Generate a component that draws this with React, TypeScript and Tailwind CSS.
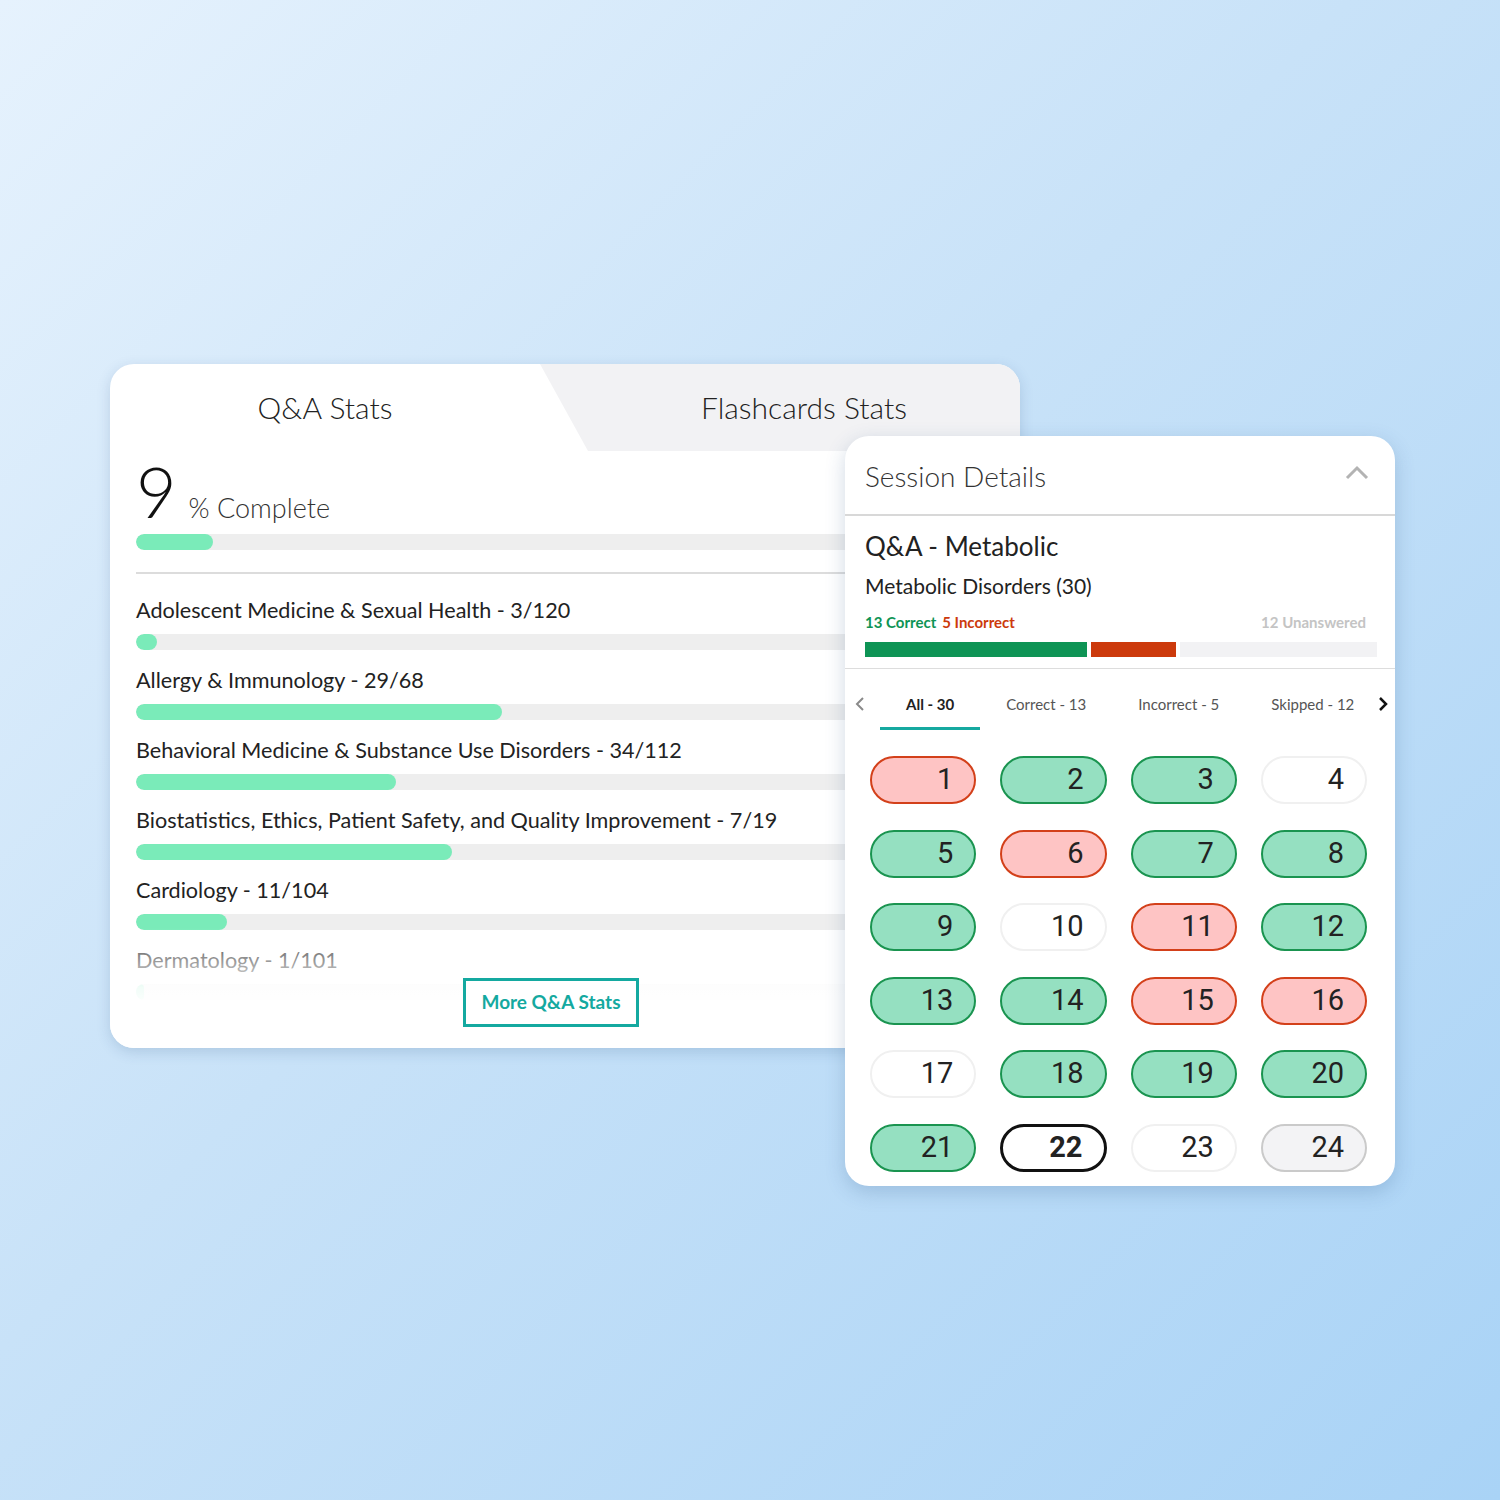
import React from "react";

const topics = [
  { name: "Adolescent Medicine & Sexual Health - 3/120", pct: 3 / 120 },
  { name: "Allergy & Immunology - 29/68", pct: 29 / 68 },
  { name: "Behavioral Medicine & Substance Use Disorders - 34/112", pct: 34 / 112 },
  { name: "Biostatistics, Ethics, Patient Safety, and Quality Improvement - 7/19", pct: 7 / 19 },
  { name: "Cardiology - 11/104", pct: 11 / 104 },
  { name: "Dermatology - 1/101", pct: 1 / 101 },
];

type Kind = "c" | "i" | "u" | "cur" | "s";
const pills: Kind[] = [
  "i", "c", "c", "u",
  "c", "i", "c", "c",
  "c", "u", "i", "c",
  "c", "c", "i", "i",
  "u", "c", "c", "c",
  "c", "cur", "u", "s",
];

const pillCls: Record<Kind, string> = {
  c: "bg-[#95e0c1] border-2 border-[#1a9450]",
  i: "bg-[#fec4c4] border-2 border-[#d3401a]",
  u: "bg-white border-2 border-[#f0f0f0]",
  cur: "bg-white border-[3px] border-[#111] font-bold",
  s: "bg-[#f3f3f5] border-2 border-[#cacaca]",
};

const tabs = [
  { label: "All - 30", active: true },
  { label: "Correct - 13", active: false },
  { label: "Incorrect - 5", active: false },
  { label: "Skipped - 12", active: false },
];

export default function App() {
  return (
    <div
      className="w-[1500px] h-[1500px] bg-[linear-gradient(135deg,#e6f2fd_0%,#c8e2f8_45%,#a9d3f6_100%)] pt-[364px] pl-[110px]"
      style={{ fontFamily: "Lato, 'Noto Sans', sans-serif" }}
    >
      <div className="relative">
        {/* Left card */}
        <div className="relative w-[910px] h-[684px] bg-white rounded-[24px] overflow-hidden shadow-[0_4px_14px_rgba(40,80,130,0.18)]">
          <div className="flex h-[87px]">
            <div className="w-[430px] flex items-center justify-center text-[30px] font-light text-[#222]">
              Q&amp;A Stats
            </div>
            <div className="w-[480px] bg-[#f2f2f4] [clip-path:polygon(0_0,100%_0,100%_100%,48px_100%)] flex items-center justify-center pl-[48px] text-[30px] font-light text-[#222]">
              Flashcards Stats
            </div>
          </div>
          <div className="px-[26px]">
            <div className="flex items-baseline mt-[5px]">
              <span className="text-[70px] leading-none font-light text-[#111]">9</span>
              <span className="ml-[12px] text-[27px] leading-none font-light text-[#333]">% Complete</span>
            </div>
            <div className="mt-[8px] h-4 rounded-full bg-[#eeeeee] overflow-hidden">
              <div className="h-full rounded-full bg-[#7aebb9]" style={{ width: "9%" }} />
            </div>
            <div className="mt-[22px] h-[2px] bg-[#dcdcdc]" />
            <div className="mt-[22px] flex flex-col gap-[16px]">
              {topics.map((t) => (
                <div key={t.name}>
                  <div className="text-[21.6px] leading-[28px] text-[#222]">{t.name}</div>
                  <div className="mt-[10px] h-4 rounded-full bg-[#eeeeee] overflow-hidden">
                    <div className="h-full rounded-full bg-[#7aebb9]" style={{ width: `${t.pct * 100}%` }} />
                  </div>
                </div>
              ))}
            </div>
          </div>
          <div className="absolute inset-x-0 bottom-0 h-[120px] bg-[linear-gradient(to_bottom,rgba(255,255,255,0)_0px,rgba(255,255,255,0.5)_30px,rgba(255,255,255,0.9)_60px,#fff_80px)]" />
          <div className="absolute left-[353px] top-[614px] w-[176px] h-[49px] border-[3px] border-[#14a9a0] bg-white flex items-center justify-center text-[19px] font-bold text-[#14a9a0]">
            More Q&amp;A Stats
          </div>
        </div>

        {/* Right card */}
        <div className="absolute left-[735px] top-[72px] w-[550px] bg-white rounded-[24px] overflow-hidden shadow-[0_6px_20px_rgba(40,80,130,0.22)]">
          <div className="h-[80px] flex items-center justify-between pl-[20px] pr-[26px] border-b-2 border-[#d8d8d8]">
            <span className="text-[28px] font-light text-[#333] mt-[2px]">Session Details</span>
            <svg width="24" height="16" viewBox="0 0 24 16" className="mb-[4px]">
              <path d="M2 13 L12 3 L22 13" fill="none" stroke="#b3b3b3" strokeWidth="3" />
            </svg>
          </div>
          <div className="px-[20px] pt-[13px] pb-[11px] border-b border-[#dddddd]">
            <div className="text-[26px] leading-[34px] text-[#222]">Q&amp;A - Metabolic</div>
            <div className="mt-[10px] text-[21px] leading-[26px] text-[#222]">Metabolic Disorders (30)</div>
            <div className="mt-[13px] flex items-center text-[15px] leading-[20px] font-bold pr-[9px]">
              <span className="text-[#0e9455]">13 Correct</span>
              <span className="ml-[6px] text-[#cc3a0c]">5 Incorrect</span>
              <span className="ml-auto text-[#c4c4c4]">12 Unanswered</span>
            </div>
            <div className="mt-[10px] flex gap-[4px] h-[15px] mr-[-2px]">
              <div className="w-[222px] bg-[#0e9455]" />
              <div className="w-[85px] bg-[#cc3a0c]" />
              <div className="flex-1 bg-[#f2f2f4]" />
            </div>
          </div>
          <div className="relative h-[62px]">
            <svg width="12" height="16" viewBox="0 0 12 16" className="absolute left-[9px] top-[27px]">
              <path d="M9 2 L3 8 L9 14" fill="none" stroke="#8a8a8a" strokeWidth="2" />
            </svg>
            <div className="absolute left-[35px] top-0 right-[22px] overflow-hidden flex h-full">
              {tabs.map((t) => (
                <div key={t.label} className="flex flex-col shrink-0 h-full">
                  <div
                    className={`flex-1 flex items-center px-[26px] pt-[12px] text-[15px] ${t.active ? "font-bold text-[#222]" : "text-[#555]"}`}
                  >
                    {t.label}
                  </div>
                  <div className={`h-[3px] mb-[1px] ${t.active ? "bg-[#16a9a0]" : "bg-transparent"}`} />
                </div>
              ))}
            </div>
            <svg width="12" height="16" viewBox="0 0 12 16" className="absolute right-[6px] top-[27px]">
              <path d="M3 2 L9 8 L3 14" fill="none" stroke="#111" strokeWidth="2.5" />
            </svg>
          </div>
          <div className="grid grid-cols-4 gap-x-[24px] gap-y-[25.5px] pl-[25px] pr-[28px] pt-[25px] pb-[14px]">
            {pills.map((k, i) => (
              <div
                key={i}
                className={`h-[48px] rounded-full flex items-center justify-end pr-[21px] text-[29px] text-[#222] ${pillCls[k]}`}
                style={{ fontFamily: "Roboto, 'Noto Sans', sans-serif" }}
              >
                {i + 1}
              </div>
            ))}
          </div>
        </div>
      </div>
    </div>
  );
}
